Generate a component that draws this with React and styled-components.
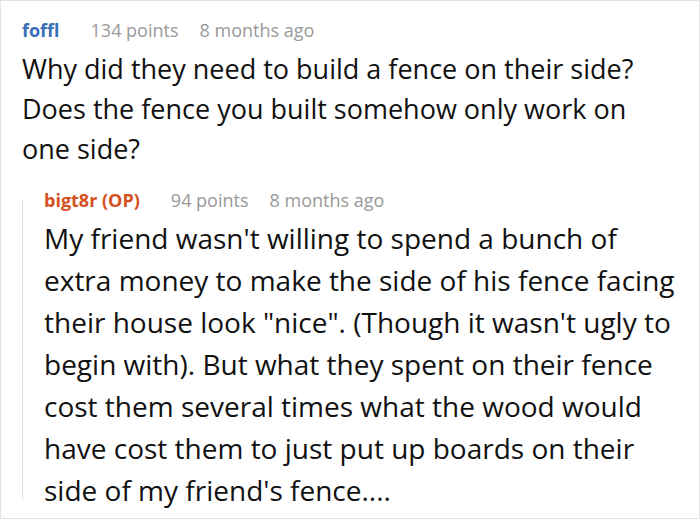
import React from "react";
import styled, { createGlobalStyle } from "styled-components";

const Global = createGlobalStyle`
  html, body { margin: 0; padding: 0; background: #fff; }
  body { font-family: "Open Sans", "Noto Sans", sans-serif; }
`;

const Frame = styled.div`
  box-sizing: border-box;
  width: 700px;
  height: 519px;
  border: 1px solid #e3e3e3;
  padding: 15px 21px 0;
  overflow: hidden;
`;

const Comment = styled.div`
  display: flex;
  flex-direction: column;
`;

const Meta = styled.div`
  display: flex;
  align-items: baseline;
  gap: 21px;
  font-size: 18px;
  line-height: 28px;
  color: #999;
  margin-bottom: ${(p) => p.$mb}px;
`;

const Author = styled.span`
  font-weight: 700;
  color: ${(p) => p.$color};
  margin-right: ${(p) => p.$gap}px;
`;

const Body = styled.p`
  margin: 0;
  font-size: ${(p) => p.$size}px;
  line-height: ${(p) => p.$lh}px;
  color: #111;
  white-space: nowrap;
`;

const Reply = styled.div`
  position: relative;
  margin-top: 17px;
  padding-left: 22px;

  &::before {
    content: "";
    position: absolute;
    left: 0;
    top: 14px;
    bottom: 12px;
    width: 1px;
    background: #dcdcdc;
  }
`;

export default function App() {
  return (
    <>
      <Global />
      <Frame>
        <Comment>
          <Meta $mb={5}>
            <Author $color="#3a6fb8" $gap={10}>foffl</Author>
            <span>134 points</span>
            <span>8 months ago</span>
          </Meta>
          <Body $size={27} $lh={40}>
            Why did they need to build a fence on their side?
            <br />
            Does the fence you built somehow only work on
            <br />
            one side?
          </Body>
        </Comment>
        <Reply>
          <Comment>
            <Meta $mb={3}>
              <Author $color="#d4511d" $gap={10}>bigt8r (OP)</Author>
              <span>94 points</span>
              <span>8 months ago</span>
            </Meta>
            <Body $size={28} $lh={42}>
              My friend wasn't willing to spend a bunch of
              <br />
              extra money to make the side of his fence facing
              <br />
              their house look "nice". (Though it wasn't ugly to
              <br />
              begin with). But what they spent on their fence
              <br />
              cost them several times what the wood would
              <br />
              have cost them to just put up boards on their
              <br />
              side of my friend's fence....
            </Body>
          </Comment>
        </Reply>
      </Frame>
    </>
  );
}
